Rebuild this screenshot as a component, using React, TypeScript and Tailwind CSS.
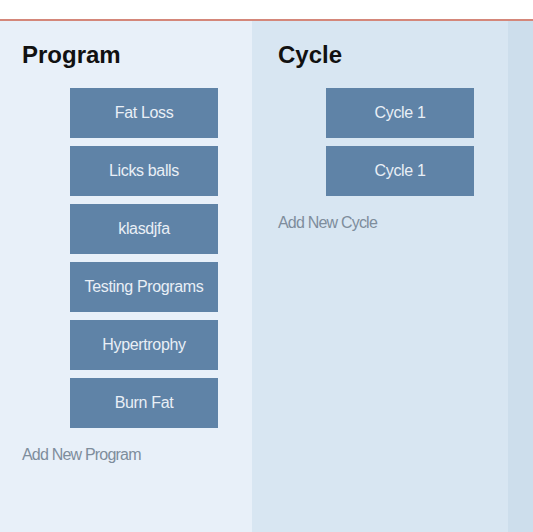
const programs = ["Fat Loss", "Licks balls", "klasdjfa", "Testing Programs", "Hypertrophy", "Burn Fat"];
const cycles = ["Cycle 1", "Cycle 1"];

const Item = ({ label }: { label: string }) => (
  <div className="ml-12 flex h-[50px] w-[148px] items-center justify-center bg-[#5f83a7] text-[16px] tracking-[-0.35px] text-[#e9eff6]">
    {label}
  </div>
);

const Column = ({ title, items, addLabel, className }: { title: string; items: string[]; addLabel: string; className: string }) => (
  <div className={`flex flex-col pt-[18px] ${className}`}>
    <h2 className="text-2xl font-bold text-[#111]">{title}</h2>
    <div className="mt-[17px] flex flex-col gap-2">
      {items.map((it, i) => (
        <Item key={i} label={it} />
      ))}
    </div>
    <p className="mt-[15px] text-[16px] leading-6 tracking-[-0.8px] text-[#7e8d9c]">{addLabel}</p>
  </div>
);

export default function App() {
  return (
    <div className="flex h-[532px] w-[533px] flex-col overflow-hidden bg-white" style={{ fontFamily: '"Liberation Sans", Arial, sans-serif' }}>
      <div className="h-[21px] shrink-0 border-b-2 border-[#d4877a] bg-white" />
      <div className="flex flex-1">
        <Column title="Program" items={programs} addLabel="Add New Program" className="w-[252px] bg-[#e8f0f9] pl-[22px]" />
        <Column title="Cycle" items={cycles} addLabel="Add New Cycle" className="w-[256px] bg-[#d8e6f2] pl-[26px]" />
        <div className="flex-1 bg-[#cddeec]" />
      </div>
    </div>
  );
}
